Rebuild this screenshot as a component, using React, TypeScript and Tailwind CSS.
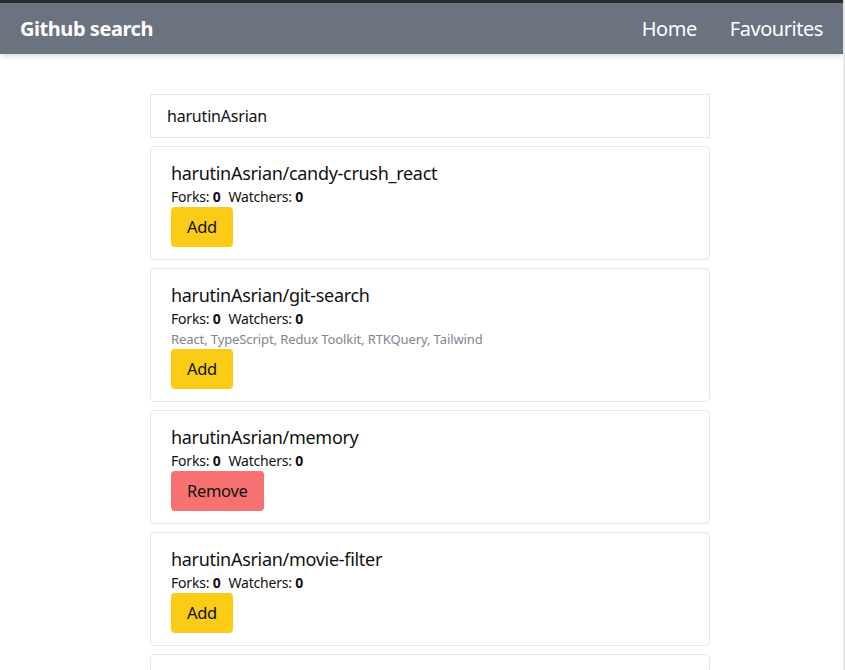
import React from "react";

type Repo = { name: string; desc?: string; fav?: boolean };

const repos: Repo[] = [
  { name: "harutinAsrian/candy-crush_react" },
  { name: "harutinAsrian/git-search", desc: "React, TypeScript, Redux Toolkit, RTKQuery, Tailwind" },
  { name: "harutinAsrian/memory", fav: true },
  { name: "harutinAsrian/movie-filter" },
  { name: "harutinAsrian/portfolio" },
];

export default function App() {
  return (
    <div
      className="min-h-[670px] bg-white text-[#111] flex"
      style={{ fontFamily: '"Noto Sans", sans-serif' }}
    >
      <div className="flex-1 min-w-0 flex flex-col">
        <div className="h-[3px] bg-[#2b2b2b]" />
        <nav className="h-[51px] bg-[#6b7280] text-white flex items-center justify-between px-5 shadow-md tracking-[-0.45px]">
          <span className="text-xl font-bold">Github search</span>
          <span className="flex items-center gap-[33px] text-xl">
            <span>Home</span>
            <span>Favourites</span>
          </span>
        </nav>
        <div className="pt-10 pl-[150px]">
          <div className="w-[560px] flex flex-col gap-2">
            <div className="h-[44px] shrink-0 border border-gray-200 px-4 flex items-center text-base tracking-[-0.2px]">
              harutinAsrian
            </div>
            {repos.map((r) => (
              <div key={r.name} className="border border-gray-200 rounded px-5 pt-3 pb-3 shrink-0">
                <h2 className="text-lg leading-7 tracking-[-0.3px]">{r.name}</h2>
                <p className="text-sm leading-5 tracking-[-0.2px]">
                  Forks: <span className="font-bold">0</span>
                  <span className="ml-2">Watchers: </span>
                  <span className="font-bold">0</span>
                </p>
                {r.desc && (
                  <p className="text-[13px] leading-5 text-[#80858f] tracking-[-0.1px]">{r.desc}</p>
                )}
                <button
                  className={
                    "rounded px-4 h-10 text-[16.5px] tracking-[-0.3px] " +
                    (r.fav ? "bg-[#f87171]" : "bg-[#facc15]")
                  }
                >
                  {r.fav ? "Remove" : "Add"}
                </button>
              </div>
            ))}
          </div>
        </div>
      </div>
      <div className="w-[2px] bg-gray-200" />
    </div>
  );
}
